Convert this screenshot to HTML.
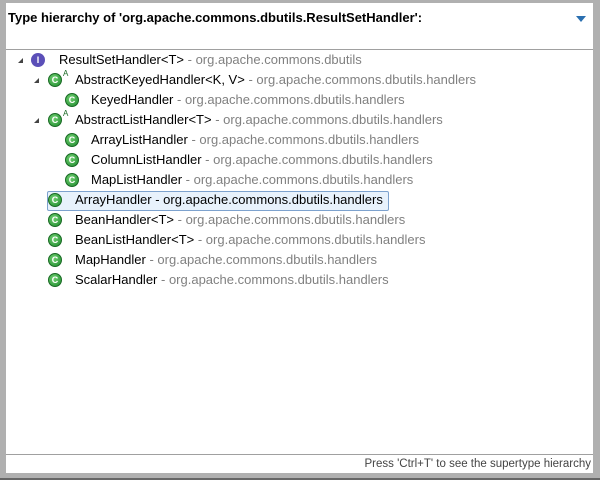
<!DOCTYPE html>
<html><head><style>
body{margin:0;width:600px;height:480px;background:#b0b0b0;position:relative;overflow:hidden;font-family:"Liberation Sans","Noto Sans CJK SC",sans-serif}
#win{position:absolute;left:6px;top:3px;width:587px;height:470px;background:#fff}
#bot{position:absolute;left:0;top:478px;width:600px;height:2px;background:#666}
#title{position:absolute;left:2px;top:7px;font-weight:bold;font-size:13px;color:#000}
#hl{position:absolute;left:0;top:46px;width:587px;height:1px;background:#a0a0a0}
#fl{position:absolute;left:0;top:451px;width:587px;height:1px;background:#a0a0a0}
#foot{position:absolute;right:2px;top:455px;font-size:11.5px;color:#444}
.r{position:absolute;height:18px;font-size:13px;line-height:18px;white-space:nowrap;color:#000}
.g{color:#808080}
.c{position:absolute;width:14px;height:14px;border-radius:50%;background:radial-gradient(circle at 40% 35%,#6fcf6f,#1e8a2e);border:1px solid #1a6a25;box-sizing:border-box;color:#fff;font-size:9px;font-weight:bold;line-height:12px;text-align:center}
.t{position:absolute;width:0;height:0;border-left:5px solid transparent;border-bottom:5px solid #444}
.a{position:absolute;font-size:8px;color:#1a6a25}
.sel{position:absolute;left:41px;top:188px;width:340px;height:18px;background:#e8f2fc;border:1px solid #7da2ce;border-radius:2px}
</style></head><body>
<div id="win">
<div id="title">Type hierarchy of 'org.apache.commons.dbutils.ResultSetHandler':</div>
<svg style="position:absolute;left:570px;top:13px" width="10" height="6"><path d="M0 0H10L5 6Z" fill="#2a6fb0"/></svg>
<div id="hl"></div>
<div class="sel"></div>
<div class="t" style="left:12px;top:55px"></div>
<div style="position:absolute;left:25px;top:50px;width:14px;height:14px;border-radius:50%;background:#5b4fb8;color:#fff;font-size:9px;font-weight:bold;text-align:center;line-height:14px">I</div>
<div class="r" style="left:53px;top:48px">ResultSetHandler&lt;T&gt; <span class="g">- org.apache.commons.dbutils</span></div>
<div class="t" style="left:28px;top:75px"></div>
<div class="c" style="left:42px;top:70px">C</div><div class="a" style="left:57px;top:66px">A</div>
<div class="r" style="left:69px;top:68px">AbstractKeyedHandler&lt;K, V&gt; <span class="g">- org.apache.commons.dbutils.handlers</span></div>
<div class="c" style="left:59px;top:90px">C</div>
<div class="r" style="left:85px;top:88px">KeyedHandler <span class="g">- org.apache.commons.dbutils.handlers</span></div>
<div class="t" style="left:28px;top:115px"></div>
<div class="c" style="left:42px;top:110px">C</div><div class="a" style="left:57px;top:106px">A</div>
<div class="r" style="left:69px;top:108px">AbstractListHandler&lt;T&gt; <span class="g">- org.apache.commons.dbutils.handlers</span></div>
<div class="c" style="left:59px;top:130px">C</div>
<div class="r" style="left:85px;top:128px">ArrayListHandler <span class="g">- org.apache.commons.dbutils.handlers</span></div>
<div class="c" style="left:59px;top:150px">C</div>
<div class="r" style="left:85px;top:148px">ColumnListHandler <span class="g">- org.apache.commons.dbutils.handlers</span></div>
<div class="c" style="left:59px;top:170px">C</div>
<div class="r" style="left:85px;top:168px">MapListHandler <span class="g">- org.apache.commons.dbutils.handlers</span></div>
<div class="c" style="left:42px;top:190px">C</div>
<div class="r" style="left:69px;top:188px">ArrayHandler - org.apache.commons.dbutils.handlers</div>
<div class="c" style="left:42px;top:210px">C</div>
<div class="r" style="left:69px;top:208px">BeanHandler&lt;T&gt; <span class="g">- org.apache.commons.dbutils.handlers</span></div>
<div class="c" style="left:42px;top:230px">C</div>
<div class="r" style="left:69px;top:228px">BeanListHandler&lt;T&gt; <span class="g">- org.apache.commons.dbutils.handlers</span></div>
<div class="c" style="left:42px;top:250px">C</div>
<div class="r" style="left:69px;top:248px">MapHandler <span class="g">- org.apache.commons.dbutils.handlers</span></div>
<div class="c" style="left:42px;top:270px">C</div>
<div class="r" style="left:69px;top:268px">ScalarHandler <span class="g">- org.apache.commons.dbutils.handlers</span></div>
<div id="fl"></div>
<div id="foot">Press 'Ctrl+T' to see the supertype hierarchy</div>
</div>
<div id="bot"></div>
</body></html>
